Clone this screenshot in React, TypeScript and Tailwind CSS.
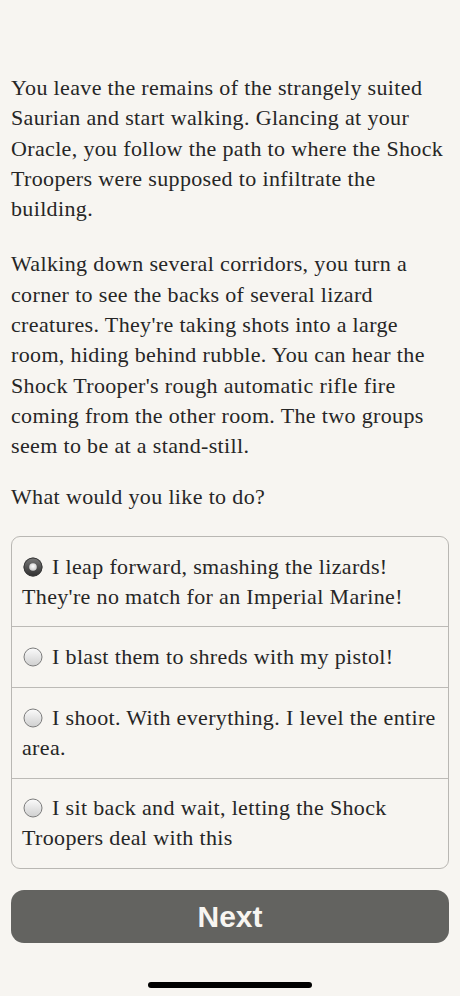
import React from "react";

const serif = { fontFamily: '"Liberation Serif", "Times New Roman", serif' };

function Radio({ selected }: { selected: boolean }) {
  return (
    <svg width="20" height="20" viewBox="0 0 20 20" className="inline-block align-[-3px] ml-[1px] mr-[9px]">
      <defs>
        <linearGradient id="rg-off" x1="0" y1="0" x2="0" y2="1">
          <stop offset="0" stopColor="#fbfbfb" />
          <stop offset="1" stopColor="#cfcfcf" />
        </linearGradient>
        <linearGradient id="rg-on" x1="0" y1="0" x2="0" y2="1">
          <stop offset="0" stopColor="#7a7a7a" />
          <stop offset="1" stopColor="#2e2e2e" />
        </linearGradient>
        <radialGradient id="rg-dot" cx="0.5" cy="0.4" r="0.6">
          <stop offset="0" stopColor="#ffffff" />
          <stop offset="1" stopColor="#c9c9c9" />
        </radialGradient>
      </defs>
      {selected ? (
        <>
          <circle cx="10" cy="10" r="9.5" fill="url(#rg-on)" />
          <circle cx="10" cy="10" r="9" fill="none" stroke="#3a3a3a" strokeWidth="1" />
          <circle cx="10" cy="10" r="3.8" fill="url(#rg-dot)" />
        </>
      ) : (
        <circle cx="10" cy="10" r="9" fill="url(#rg-off)" stroke="#7c7c7c" strokeWidth="1" />
      )}
    </svg>
  );
}

const p1 = [
  "You leave the remains of the strangely suited",
  "Saurian and start walking. Glancing at your",
  "Oracle, you follow the path to where the Shock",
  "Troopers were supposed to infiltrate the",
  "building.",
];
const p2 = [
  "Walking down several corridors, you turn a",
  "corner to see the backs of several lizard",
  "creatures. They're taking shots into a large",
  "room, hiding behind rubble. You can hear the",
  "Shock Trooper's rough automatic rifle fire",
  "coming from the other room. The two groups",
  "seem to be at a stand-still.",
];

const options = [
  { lines: ["I leap forward, smashing the lizards!", "They're no match for an Imperial Marine!"], selected: true },
  { lines: ["I blast them to shreds with my pistol!"], selected: false },
  { lines: ["I shoot. With everything. I level the entire", "area."], selected: false },
  { lines: ["I sit back and wait, letting the Shock", "Troopers deal with this"], selected: false },
];

export default function App() {
  return (
    <div className="min-h-[996px] w-full bg-[#f7f5f1] flex flex-col px-[11px] pt-[73px] text-[#262626]" style={serif}>
      <div className="text-[22px] leading-[30.3px] tracking-[0.35px]">
        {p1.map((l) => (
          <div key={l} className="whitespace-nowrap">{l}</div>
        ))}
      </div>
      <div className="mt-[25px] text-[22px] leading-[30.3px] tracking-[0.35px]">
        {p2.map((l) => (
          <div key={l} className="whitespace-nowrap">{l}</div>
        ))}
      </div>
      <div className="mt-[20px] text-[22px] leading-[30.3px] tracking-[0.35px]">What would you like to do?</div>

      <div className="mt-[24px] border border-[#b9b7b3] rounded-[9px] flex flex-col">
        {options.map((o, i) => (
          <div
            key={i}
            className={
              "px-[10px] py-[14.8px] text-[22px] leading-[30px] tracking-[0.35px] " +
              (i > 0 ? "border-t border-[#bcbab6]" : "")
            }
          >
            {o.lines.map((l, j) => (
              <div key={j} className="whitespace-nowrap">
                {j === 0 && <Radio selected={o.selected} />}
                {l}
              </div>
            ))}
          </div>
        ))}
      </div>

      <button
        className="mt-[21px] h-[53px] w-full rounded-[13px] bg-[#636360] text-[#f7f5f1] text-[30px] font-bold flex items-center justify-center"
        style={{ fontFamily: '"Liberation Sans", Arial, sans-serif' }}
      >
        Next
      </button>

      <div className="mt-[39px] flex justify-center">
        <div className="w-[164px] h-[6px] rounded-full bg-black" />
      </div>
    </div>
  );
}
